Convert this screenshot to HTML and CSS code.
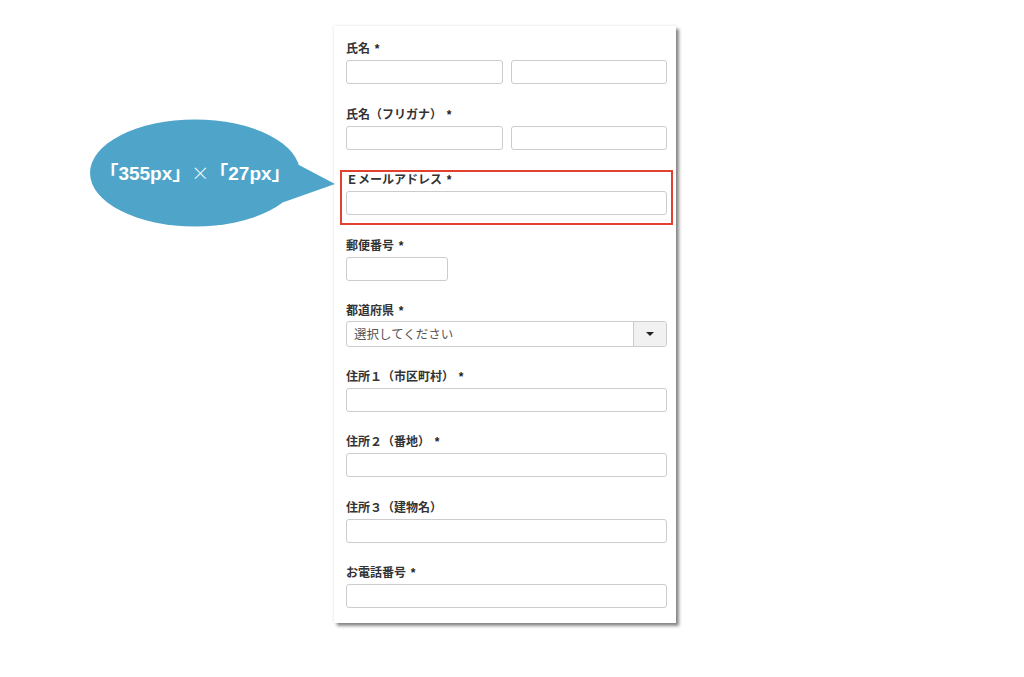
FILE: index.html
```html
<!DOCTYPE html>
<html lang="ja">
<head>
<meta charset="utf-8">
<link rel="stylesheet" href="styles.css">
</head>
<body>
<div class="page">
  <div class="bubble">
    <svg class="bubble-shape" width="250" height="112" viewBox="0 0 250 112">
      <polygon points="150,40 211,47 247,66 196,84 150,80" fill="#4fa5c9"/>
      <ellipse cx="107" cy="55" rx="105" ry="53.5" fill="#4fa5c9"/>
    </svg>
    <span class="bubble-text">「355px」<span class="times">×</span>「27px」</span>
  </div>
  <form class="panel">
    <div class="field">
      <div class="label">氏名 <span class="req">*</span></div>
      <div class="pair">
        <div class="input"></div>
        <div class="input"></div>
      </div>
    </div>
    <div class="field">
      <div class="label">氏名（フリガナ） <span class="req">*</span></div>
      <div class="pair">
        <div class="input"></div>
        <div class="input"></div>
      </div>
    </div>
    <div class="field highlight">
      <div class="label">Ｅメールアドレス <span class="req">*</span></div>
      <div class="input"></div>
      <div class="mark"></div>
    </div>
    <div class="field">
      <div class="label">郵便番号 <span class="req">*</span></div>
      <div class="input short"></div>
    </div>
    <div class="field">
      <div class="label">都道府県 <span class="req">*</span></div>
      <div class="select">
        <span class="select-text">選択してください</span>
        <span class="select-btn"><span class="caret"></span></span>
      </div>
    </div>
    <div class="field">
      <div class="label">住所１（市区町村） <span class="req">*</span></div>
      <div class="input"></div>
    </div>
    <div class="field">
      <div class="label">住所２（番地） <span class="req">*</span></div>
      <div class="input"></div>
    </div>
    <div class="field">
      <div class="label">住所３（建物名）</div>
      <div class="input"></div>
    </div>
    <div class="field last">
      <div class="label">お電話番号 <span class="req">*</span></div>
      <div class="input"></div>
    </div>
  </form>
</div>
</body>
</html>
```

FILE: styles.css
```css
html, body {
  margin: 0;
  padding: 0;
  background: #ffffff;
}
body {
  width: 1024px;
  height: 677px;
  overflow: hidden;
  font-family: "Noto Sans CJK JP", "Noto Sans", sans-serif;
  color: #333333;
}
.page {
  position: relative;
  padding: 26px 0 0 334px;
}
.panel {
  display: block;
  width: 342px;
  box-sizing: border-box;
  padding: 14px 9px 15px 12px;
  background: #ffffff;
  box-shadow: 0 0 3px rgba(0, 0, 0, 0.12), 3px 3px 3px rgba(0, 0, 0, 0.45);
}
.field {
  position: relative;
  margin-bottom: 21.5px;
}
.field.last {
  margin-bottom: 0;
}
.label {
  height: 16px;
  line-height: 16px;
  font-size: 12px;
  font-weight: 700;
  color: #333333;
  margin-bottom: 4px;
  white-space: nowrap;
}
.req {
  font-family: "Liberation Sans", sans-serif;
  font-size: 12px;
  font-weight: 700;
  color: #222222;
  margin-left: 2px;
}
.pair {
  display: flex;
  gap: 8px;
}
.pair .input {
  flex: 1;
}
.input {
  height: 24px;
  box-sizing: border-box;
  border: 1px solid #cccccc;
  border-radius: 3px;
  background: #ffffff;
}
.input.short {
  width: 102px;
}
.select {
  display: flex;
  height: 26px;
  box-sizing: border-box;
  border: 1px solid #cccccc;
  border-radius: 3px;
  overflow: hidden;
  margin-top: -1px;
  margin-bottom: -1px;
}
.select-text {
  flex: 1;
  padding-left: 7px;
  line-height: 24px;
  font-size: 12.5px;
  color: #555555;
}
.select-btn {
  width: 32px;
  background: #f1f1f1;
  border-left: 1px solid #cccccc;
  display: flex;
  align-items: center;
  justify-content: center;
}
.caret {
  width: 0;
  height: 0;
  border-left: 4px solid transparent;
  border-right: 4px solid transparent;
  border-top: 4px solid #222222;
}
.mark {
  position: absolute;
  top: -1px;
  left: -6px;
  right: -6px;
  bottom: -10px;
  border: 2px solid #e2412f;
}
.bubble {
  position: absolute;
  left: 88px;
  top: 118px;
  width: 250px;
  height: 112px;
}
.bubble-shape {
  display: block;
}
.bubble-text {
  position: absolute;
  left: 2px;
  top: 42px;
  width: 210px;
  text-align: center;
  font-family: "Liberation Sans", "Noto Sans CJK JP", sans-serif;
  font-weight: 700;
  font-size: 19px;
  line-height: 24px;
  color: #ffffff;
  white-space: nowrap;
}
.times {
  font-family: "Noto Sans CJK JP", sans-serif;
  font-weight: 300;
  font-size: 18px;
}
```
